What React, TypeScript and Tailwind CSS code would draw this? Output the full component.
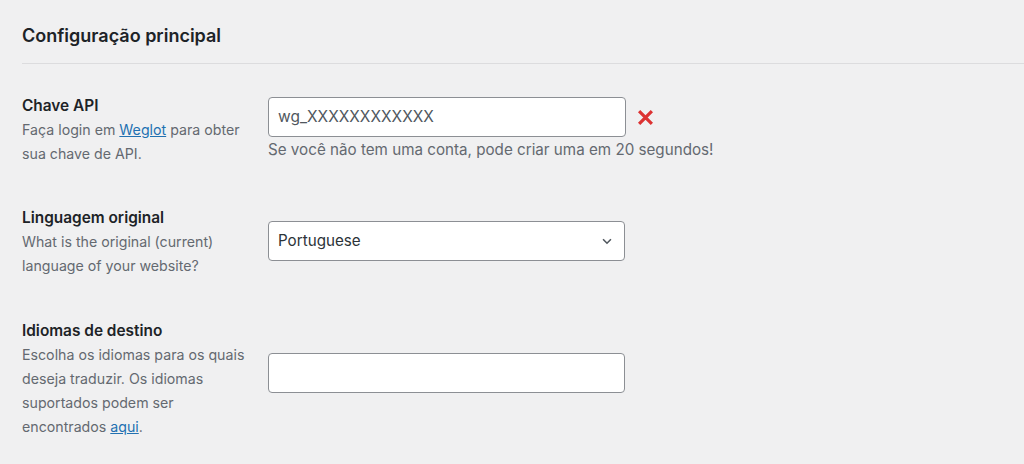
import React from "react";

const font = { fontFamily: 'Inter, "Liberation Sans", Arial, sans-serif' };

function Row({
  label,
  children,
  field,
  fieldTop,
}: {
  label: string;
  children: React.ReactNode;
  field: React.ReactNode;
  fieldTop: string;
}) {
  return (
    <div className="flex items-start">
      <div className="w-[246px] shrink-0 pr-[10px]">
        <div className="text-[15.4px] leading-[24px] font-semibold text-[#1d2327]">{label}</div>
        <div className="text-[14.2px] leading-[24px] text-[#646970]">{children}</div>
      </div>
      <div className={fieldTop}>{field}</div>
    </div>
  );
}

export default function App() {
  return (
    <div className="min-h-[464px] w-full bg-[#f0f0f1]" style={font}>
      {/* Section title */}
      <div className="pl-[22px] pt-[22px]">
        <h2 className="text-[18px] leading-[28px] font-semibold text-[#1d2327]">Configuração principal</h2>
      </div>
      <div className="ml-[22px] mt-[13px] border-t border-[#dcdcde]" />

      <div className="pl-[22px] pt-[30px] flex flex-col">
        {/* API key */}
        <Row
          label="Chave API"
          fieldTop="mt-[3px]"
          field={
            <div>
              <div className="flex items-center">
                <div className="w-[358px] h-[40px] rounded-[4px] border border-[#8c8f94] bg-white flex items-center px-[9px] text-[15.5px] text-[#50575e]">
                  wg_XXXXXXXXXXXX
                </div>
                <svg className="ml-[11px] w-[17px] h-[17px]" viewBox="0 0 16 16">
                  <path d="M2 2 L14 14 M14 2 L2 14" stroke="#dc3232" strokeWidth="3" strokeLinecap="butt" />
                </svg>
              </div>
              <p className="mt-[2px] text-[15.2px] leading-[22px] text-[#646970]">
                Se você não tem uma conta, pode criar uma em 20 segundos!
              </p>
            </div>
          }
        >
          Faça login em{" "}
          <a href="#" className="text-[#2271b1] underline">
            Weglot
          </a>{" "}
          para obter sua chave de API.
        </Row>

        {/* Original language */}
        <div className="mt-[40px]">
          <Row
            label="Linguagem original"
            fieldTop="mt-[15px]"
            field={
              <div className="w-[357px] h-[40px] rounded-[4px] border border-[#8c8f94] bg-white flex items-center justify-between pl-[9px] pr-[10px] text-[15.2px] text-[#2c3338]">
                <span>Portuguese</span>
                <svg className="w-[14px] h-[14px]" viewBox="0 0 16 16" fill="none">
                  <path d="M3.5 6 L8 10.5 L12.5 6" stroke="#50575e" strokeWidth="1.8" />
                </svg>
              </div>
            }
          >
            What is the original (current) language of your website?
          </Row>
        </div>

        {/* Target languages */}
        <div className="mt-[41px]">
          <Row
            label="Idiomas de destino"
            fieldTop="mt-[34px]"
            field={<div className="w-[357px] h-[40px] rounded-[4px] border border-[#8c8f94] bg-white" />}
          >
            Escolha os idiomas para os quais deseja traduzir. Os idiomas suportados podem ser encontrados{" "}
            <a href="#" className="text-[#2271b1] underline">
              aqui
            </a>
            .
          </Row>
        </div>
      </div>
    </div>
  );
}
